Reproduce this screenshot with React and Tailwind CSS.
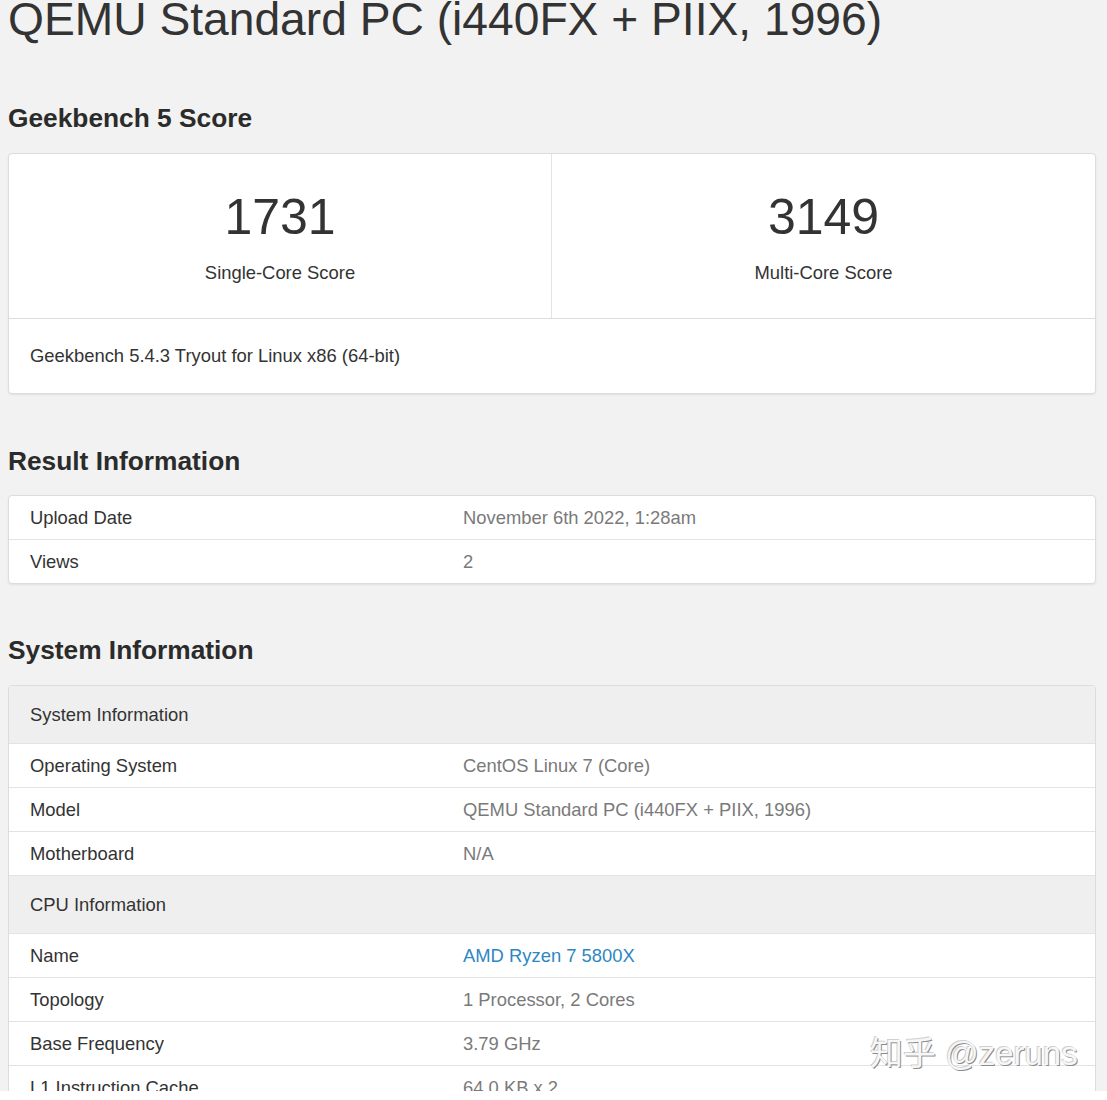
import React from "react";

const font = { fontFamily: '"Liberation Sans", Arial, "Noto Sans CJK SC", sans-serif' };

function Row({ label, value, link }) {
  return (
    <div className="grid grid-cols-[433px_1fr] h-[44px] items-center border-t border-[#e3e3e3] text-[18.4px] leading-[24px]">
      <div className="pl-[21px] text-[#333]">{label}</div>
      <div className={"pl-[21px] " + (link ? "text-[#2d87c3]" : "text-[#7a7a7a]")}>{value}</div>
    </div>
  );
}

function Header({ label, first }) {
  return (
    <div className={"flex items-center bg-[#efefef] pl-[21px] text-[18.4px] leading-[24px] text-[#333] " + (first ? "h-[57px]" : "border-t border-[#e3e3e3] h-[58px]")}>
      {label}
    </div>
  );
}

export default function App() {
  return (
    <div style={font} className="bg-white min-h-[1100px]">
      <div className="relative h-[1091px] overflow-hidden bg-[#f2f2f2] pl-[8px] pr-[11px]">
        <h1 className="-mt-[4px] text-[46.2px] leading-[46px] text-[#333] whitespace-nowrap">
          QEMU Standard PC (i440FX + PIIX, 1996)
        </h1>

        <h2 className="mt-[61px] mb-[20px] text-[26.3px] leading-[30px] font-bold text-[#2b2b2b]">
          Geekbench 5 Score
        </h2>
        <div className="bg-white border border-[#dcdcdc] rounded-[4px] shadow-[0_1px_2px_rgba(0,0,0,0.08)]">
          <div className="grid grid-cols-2 border-b border-[#dcdcdc]">
            <div className="border-r border-[#e3e3e3] pt-[38px] pb-[33px] flex flex-col items-center text-[#333]">
              <div className="text-[50px] leading-[50px]">1731</div>
              <div className="mt-[19px] text-[18.4px] leading-[24px]">Single-Core Score</div>
            </div>
            <div className="pt-[38px] pb-[33px] flex flex-col items-center text-[#333]">
              <div className="text-[50px] leading-[50px]">3149</div>
              <div className="mt-[19px] text-[18.4px] leading-[24px]">Multi-Core Score</div>
            </div>
          </div>
          <div className="pl-[21px] pt-[25px] pb-[25px] text-[18.4px] leading-[24px] text-[#333]">
            Geekbench 5.4.3 Tryout for Linux x86 (64-bit)
          </div>
        </div>

        <h2 className="mt-[52px] mb-[19px] text-[26.3px] leading-[30px] font-bold text-[#2b2b2b]">
          Result Information
        </h2>
        <div className="bg-white border border-[#dcdcdc] rounded-[4px] shadow-[0_1px_2px_rgba(0,0,0,0.08)] overflow-hidden">
          <div className="[&>*:first-child]:border-t-0 [&>*:first-child]:h-[43px]">
            <Row label="Upload Date" value="November 6th 2022, 1:28am" />
            <Row label="Views" value="2" />
          </div>
        </div>

        <h2 className="mt-[51px] mb-[20px] text-[26.3px] leading-[30px] font-bold text-[#2b2b2b]">
          System Information
        </h2>
        <div className="bg-white border border-[#dcdcdc] rounded-[4px] overflow-hidden">
          <Header label="System Information" first />
          <Row label="Operating System" value="CentOS Linux 7 (Core)" />
          <Row label="Model" value="QEMU Standard PC (i440FX + PIIX, 1996)" />
          <Row label="Motherboard" value="N/A" />
          <Header label="CPU Information" />
          <Row label="Name" value="AMD Ryzen 7 5800X" link />
          <Row label="Topology" value="1 Processor, 2 Cores" />
          <Row label="Base Frequency" value="3.79 GHz" />
          <Row label="L1 Instruction Cache" value="64.0 KB x 2" />
          <Row label="L1 Data Cache" value="64.0 KB x 2" />
        </div>

        <div className="absolute left-[870px] top-[1034px] text-[33px] leading-[40px] text-[#f7f7f7] whitespace-nowrap [text-shadow:1px_1px_0_#8c8c8c,-1px_-1px_0_#d0d0d0]">
          知乎 @zeruns
        </div>
      </div>
    </div>
  );
}
